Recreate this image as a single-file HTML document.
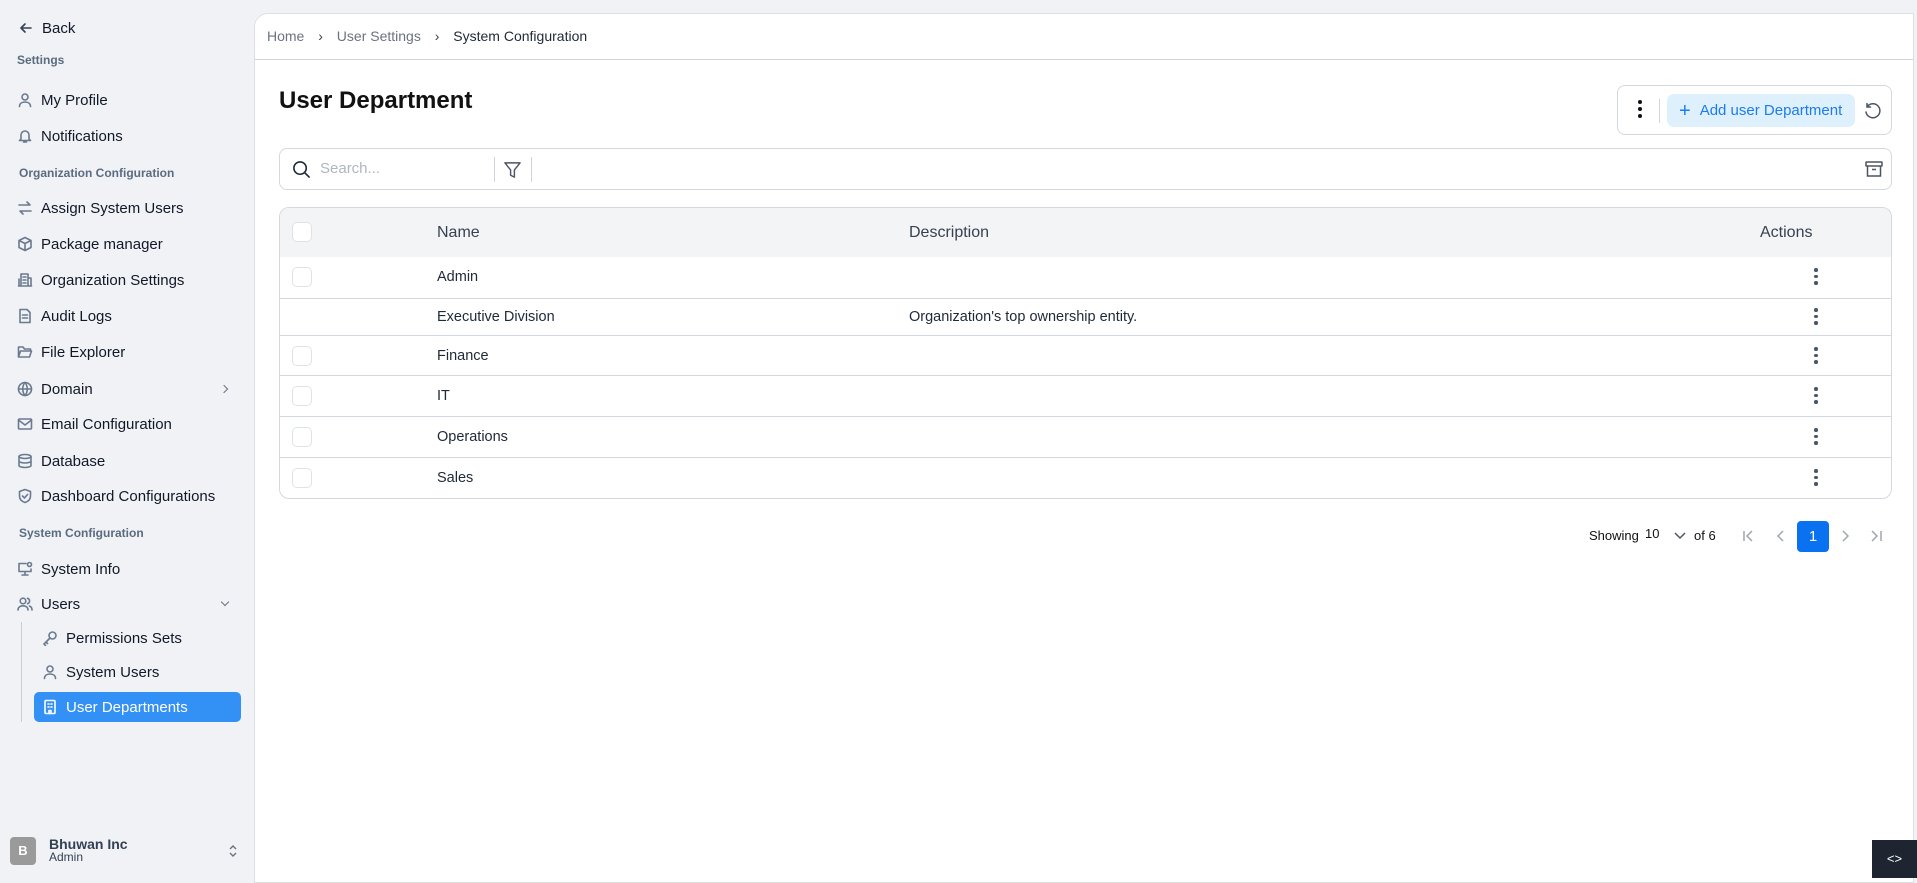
<!DOCTYPE html>
<html><head><meta charset="utf-8"><style>
*{box-sizing:border-box;margin:0;padding:0}
body{width:1917px;height:878px;overflow:hidden;background:#f0f2f5;font-family:"Liberation Sans",sans-serif;color:#111827;position:relative}
.a{position:absolute}
.side{font-size:15px;color:#111827}
.si{position:absolute;left:17px;display:flex;align-items:center;height:20px}
.si svg{width:16px;height:16px;margin-right:8px;stroke:#6b7a90;fill:none;stroke-width:1.6;stroke-linecap:round;stroke-linejoin:round}
.sec{position:absolute;left:19px;font-size:12px;font-weight:bold;color:#5b6b80}
.main{position:absolute;left:254px;top:13px;width:1660px;height:870px;background:#fff;border:1px solid #dde1e6;border-radius:14px 0 0 0}
.row{position:absolute;left:0;width:100%;border-top:1px solid #d4d9e0;font-size:14.5px;color:#1f2937}
.cb{position:absolute;left:12px;width:20px;height:20px;border:1px solid #dfe3e8;border-radius:5px;background:#fff}
.dots{position:absolute;left:1534px;width:4px}
.dots i{display:block;width:3.5px;height:3.5px;border-radius:50%;background:#4b5563;margin-bottom:3px}
</style></head><body>
<div class="side">
<div class="si" style="top:18px;left:18px"><svg viewBox="0 0 16 16" style="stroke:#374151"><path d="M13 8H3M7 4L3 8l4 4"/></svg>Back</div>
<div class="sec" style="top:53px;left:17px">Settings</div>
<div class="si" style="top:90px"><svg viewBox="0 0 16 16"><circle cx="8" cy="5" r="3"/><path d="M2.5 14.5c0-3 2.5-4.5 5.5-4.5s5.5 1.5 5.5 4.5"/></svg>My Profile</div>
<div class="si" style="top:126px"><svg viewBox="0 0 16 16"><path d="M4 11V7a4 4 0 018 0v4l1.5 1.5h-11zM6.5 14h3"/></svg>Notifications</div>
<div class="sec" style="top:166px">Organization Configuration</div>
<div class="si" style="top:198px"><svg viewBox="0 0 16 16"><path d="M2 5h11l-3-3M14 11H3l3 3"/></svg>Assign System Users</div>
<div class="si" style="top:234px"><svg viewBox="0 0 16 16"><path d="M8 1.5l6 3v7l-6 3-6-3v-7zM2 4.5l6 3 6-3M8 7.5v7"/></svg>Package manager</div>
<div class="si" style="top:270px"><svg viewBox="0 0 16 16"><path d="M4 14V2h7v12M1.5 14h13M11 6h3v8M2 7v7M6 5h3M6 8h3M6 11h3"/></svg>Organization Settings</div>
<div class="si" style="top:306px"><svg viewBox="0 0 16 16"><path d="M3 1.5h7l3 3v10H3zM5.5 7h5M5.5 10h5"/></svg>Audit Logs</div>
<div class="si" style="top:342px"><svg viewBox="0 0 16 16"><path d="M1.5 13V3h4.5l1.5 2h6v2M1.5 13l2-6h11l-2 6z"/></svg>File Explorer</div>
<div class="si" style="top:379px"><svg viewBox="0 0 16 16"><circle cx="8" cy="8" r="6.5"/><path d="M1.5 8h13M8 1.5c-3 3.5-3 9.5 0 13M8 1.5c3 3.5 3 9.5 0 13"/></svg>Domain</div>
<div class="a" style="left:221px;top:386px;width:6px;height:6px;border-right:1.5px solid #6b7280;border-top:1.5px solid #6b7280;transform:rotate(45deg)"></div>
<div class="si" style="top:414px"><svg viewBox="0 0 16 16"><rect x="1.5" y="3" width="13" height="10" rx="1"/><path d="M1.5 4l6.5 5 6.5-5"/></svg>Email Configuration</div>
<div class="si" style="top:451px"><svg viewBox="0 0 16 16"><ellipse cx="8" cy="3.5" rx="6" ry="2"/><path d="M2 3.5v9c0 1.1 2.7 2 6 2s6-.9 6-2v-9M2 8c0 1.1 2.7 2 6 2s6-.9 6-2"/></svg>Database</div>
<div class="si" style="top:486px"><svg viewBox="0 0 16 16"><path d="M8 1.5l5.5 2v4.5c0 3.5-2.5 5.5-5.5 6.5-3-1-5.5-3-5.5-6.5V3.5zM5.5 8l2 2 3-3.5"/></svg>Dashboard Configurations</div>
<div class="sec" style="top:526px">System Configuration</div>
<div class="si" style="top:559px"><svg viewBox="0 0 16 16"><path d="M9 2.5H2v8h12V8M5 14h6M8 10.5V14"/><circle cx="12.5" cy="3.5" r="2"/></svg>System Info</div>
<div class="si" style="top:594px"><svg viewBox="0 0 16 16"><circle cx="6" cy="5" r="2.8"/><path d="M1 14c0-2.8 2.2-4.2 5-4.2s5 1.4 5 4.2M10.5 2.3a2.8 2.8 0 010 5.4M12.5 10c1.5.6 2.5 2 2.5 4"/></svg>Users</div>
<div class="a" style="left:222px;top:599px;width:6px;height:6px;border-right:1.5px solid #6b7280;border-bottom:1.5px solid #6b7280;transform:rotate(45deg)"></div>
<div class="a" style="left:21px;top:622px;width:1px;height:100px;background:#c9ced6"></div>
<div class="si" style="top:628px;left:42px"><svg viewBox="0 0 16 16"><circle cx="10.5" cy="5.5" r="3.5"/><path d="M8 8L2 14l1.5 1.5M4 12l1.5 1.5"/></svg>Permissions Sets</div>
<div class="si" style="top:662px;left:42px"><svg viewBox="0 0 16 16"><circle cx="8" cy="5" r="3"/><path d="M2.5 14.5c0-3 2.5-4.5 5.5-4.5s5.5 1.5 5.5 4.5"/></svg>System Users</div>
<div class="a" style="left:34px;top:692px;width:207px;height:30px;background:#3390f5;border-radius:5px"></div>
<div class="si" style="top:697px;left:42px;color:#fff"><svg viewBox="0 0 16 16" style="stroke:#fff"><rect x="3" y="1.5" width="10" height="13" rx="1"/><path d="M6 5h1M9 5h1M6 8h1M9 8h1M7 14.5v-3h2v3"/></svg>User Departments</div>
<div class="a" style="left:10px;top:837px;width:26px;height:28px;border-radius:4px;background:#9a9a9a;color:#fff;font-weight:bold;font-size:13px;text-align:center;line-height:28px">B</div>
<div class="a" style="left:49px;top:836px;font-size:14px;font-weight:bold;color:#334155">Bhuwan Inc</div>
<div class="a" style="left:49px;top:850px;font-size:12px;color:#334155">Admin</div>
<svg class="a" style="left:227px;top:843px" width="12" height="16" viewBox="0 0 12 16" fill="none" stroke="#6b7280" stroke-width="1.4"><path d="M3 6l3-3 3 3M3 10l3 3 3-3"/></svg>
</div>

<div class="main">
<div class="a" style="left:12px;top:14px;font-size:14px;color:#6b7280">Home <span style="margin:0 10px;color:#374151">›</span> User Settings <span style="margin:0 10px;color:#374151">›</span> <span style="color:#1f2937">System Configuration</span></div>
<div class="a" style="left:0;top:45px;width:100%;height:1px;background:#d1d5db"></div>
<div class="a" style="left:24px;top:73px;font-size:24px;font-weight:bold;color:#111">User Department</div>
<div class="a" style="left:1362px;top:71px;width:275px;height:50px;border:1px solid #d4d9e0;border-radius:8px">
 <div class="a" style="left:20px;top:14px"><i style="display:block;width:4px;height:4px;background:#111;border-radius:50%;margin-bottom:3px"></i><i style="display:block;width:4px;height:4px;background:#111;border-radius:50%;margin-bottom:3px"></i><i style="display:block;width:4px;height:4px;background:#111;border-radius:50%"></i></div>
 <div class="a" style="left:41px;top:13px;width:1px;height:24px;background:#d1d5db"></div>
 <div class="a" style="left:49px;top:8px;width:188px;height:33px;background:#dff0fd;border-radius:7px;color:#1a7cf0;font-size:15px;line-height:33px;padding-left:12px"><span style="font-size:20px;vertical-align:-2px;margin-right:9px;font-weight:300">+</span>Add user Department</div>
 <svg class="a" style="left:245px;top:15px" width="20" height="20" viewBox="0 0 20 20" fill="none" stroke="#4b5563" stroke-width="1.5" stroke-linecap="round"><path d="M4 6a7 7 0 11-1 5M4 2.5V6h3.5"/></svg>
</div>
<div class="a" style="left:24px;top:134px;width:1613px;height:42px;border:1px solid #d4d9e0;border-radius:8px">
 <svg class="a" style="left:12px;top:11px" width="19" height="19" viewBox="0 0 20 20" fill="none" stroke="#1f2937" stroke-width="1.7" stroke-linecap="round"><circle cx="8.5" cy="8.5" r="6.5"/><path d="M13.5 13.5L18 18"/></svg>
 <div class="a" style="left:40px;top:11px;font-size:15px;color:#b0b6c0">Search...</div>
 <div class="a" style="left:214px;top:8px;width:1px;height:25px;background:#cfd4da"></div>
 <svg class="a" style="left:223px;top:11px" width="19" height="19" viewBox="0 0 20 20" fill="none" stroke="#4b5563" stroke-width="1.5" stroke-linejoin="round"><path d="M2 3h16l-6 7.5V18l-4-2v-5.5z"/></svg>
 <div class="a" style="left:251px;top:8px;width:1px;height:25px;background:#cfd4da"></div>
 <svg class="a" style="left:1584px;top:10px" width="20" height="20" viewBox="0 0 20 20" fill="none" stroke="#4b5563" stroke-width="1.5"><rect x="2" y="3" width="16" height="4" rx="0.5"/><path d="M3.5 7v10h13V7M8 10.5h4"/></svg>
</div>
<div class="a" style="left:24px;top:193px;width:1613px;height:292px;border:1px solid #d4d9e0;border-radius:10px;overflow:hidden">
 <div class="a" style="left:0;top:0;width:100%;height:49px;background:#f3f4f6;font-size:16px;color:#374151">
  <div class="cb" style="top:14px"></div>
  <div class="a" style="left:157px;top:16px">Name</div>
  <div class="a" style="left:629px;top:16px">Description</div>
  <div class="a" style="left:1480px;top:16px">Actions</div>
 </div>
 <div class="row" style="top:49px;height:41px;border-top:none"><div class="cb" style="top:10px"></div><div class="a" style="left:157px;top:12px">Admin</div><div class="dots" style="top:11px"><i></i><i></i><i></i></div></div>
 <div class="row" style="top:90px;height:37px"><div class="a" style="left:157px;top:10px">Executive Division</div><div class="a" style="left:629px;top:10px">Organization's top ownership entity.</div><div class="dots" style="top:9px"><i></i><i></i><i></i></div></div>
 <div class="row" style="top:127px;height:40px"><div class="cb" style="top:10px"></div><div class="a" style="left:157px;top:12px">Finance</div><div class="dots" style="top:11px"><i></i><i></i><i></i></div></div>
 <div class="row" style="top:167px;height:41px"><div class="cb" style="top:10px"></div><div class="a" style="left:157px;top:12px">IT</div><div class="dots" style="top:11px"><i></i><i></i><i></i></div></div>
 <div class="row" style="top:208px;height:41px"><div class="cb" style="top:10px"></div><div class="a" style="left:157px;top:12px">Operations</div><div class="dots" style="top:11px"><i></i><i></i><i></i></div></div>
 <div class="row" style="top:249px;height:42px"><div class="cb" style="top:10px"></div><div class="a" style="left:157px;top:12px">Sales</div><div class="dots" style="top:11px"><i></i><i></i><i></i></div></div>
</div>
<div class="a" style="left:1334px;top:514px;font-size:13px;color:#111">Showing</div>
<div class="a" style="left:1390px;top:512px;font-size:13px;color:#111">10</div>
<svg class="a" style="left:1418px;top:517px" width="14" height="10" viewBox="0 0 14 10" fill="none" stroke="#4b5563" stroke-width="1.5"><path d="M2 2l5 5 5-5"/></svg>
<div class="a" style="left:1439px;top:514px;font-size:13px;color:#111">of 6</div>
<svg class="a" style="left:1486px;top:514px;" width="16" height="16" viewBox="0 0 16 16" fill="none" stroke="#a0a6ae" stroke-width="1.5"><path d="M3 3v10M11 3L6 8l5 5"/></svg>
<svg class="a" style="left:1518px;top:514px;" width="16" height="16" viewBox="0 0 16 16" fill="none" stroke="#a0a6ae" stroke-width="1.5"><path d="M10 3L5 8l5 5"/></svg>
<div class="a" style="left:1542px;top:507px;width:32px;height:31px;background:#0a72f0;border-radius:4px;color:#fff;font-size:15px;text-align:center;line-height:31px">1</div>
<svg class="a" style="left:1582px;top:514px;" width="16" height="16" viewBox="0 0 16 16" fill="none" stroke="#a0a6ae" stroke-width="1.5"><path d="M6 3l5 5-5 5"/></svg>
<svg class="a" style="left:1613px;top:514px;" width="16" height="16" viewBox="0 0 16 16" fill="none" stroke="#a0a6ae" stroke-width="1.5"><path d="M4 3l5 5-5 5M13 3v10"/></svg>
</div>
<div class="a" style="left:1872px;top:840px;width:45px;height:38px;background:#1e2530;color:#fff;font-size:13px;text-align:center;line-height:38px">&lt;&gt;</div>
</body></html>
